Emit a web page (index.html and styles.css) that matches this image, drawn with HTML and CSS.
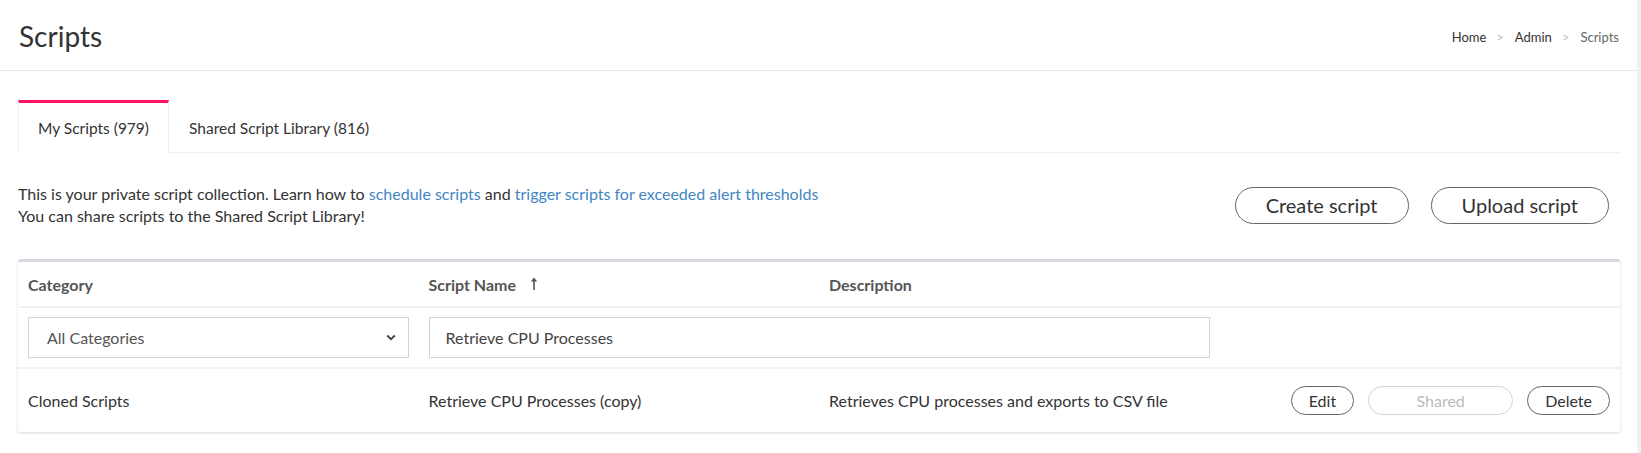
FILE: index.html
```html
<!DOCTYPE html>
<html lang="en">
<head>
<meta charset="utf-8">
<title>Scripts</title>
<link rel="stylesheet" href="styles.css">
</head>
<body>
<div class="page">
  <div class="main">
    <header class="topbar">
      <h1 class="title">Scripts</h1>
      <nav class="crumbs">
        <a class="crumb" href="#">Home</a>
        <span class="sep">&gt;</span>
        <a class="crumb" href="#">Admin</a>
        <span class="sep">&gt;</span>
        <span class="crumb current">Scripts</span>
      </nav>
    </header>
    <section class="content">
      <div class="tabs">
        <div class="tab active">My Scripts (979)</div>
        <div class="tab">Shared Script Library (816)</div>
        <div class="tab-fill"></div>
      </div>
      <div class="intro">
        <div class="intro-text">
          <p>This is your private script collection. Learn how to <a href="#">schedule scripts</a> and <a href="#">trigger scripts for exceeded alert thresholds</a></p>
          <p>You can share scripts to the Shared Script Library!</p>
        </div>
        <div class="intro-actions">
          <button class="pill big">Create script</button>
          <button class="pill big">Upload script</button>
        </div>
      </div>
      <div class="card">
        <table class="grid">
          <colgroup>
            <col class="c"><col class="c"><col class="c"><col class="c">
          </colgroup>
          <thead>
            <tr class="head">
              <th>Category</th>
              <th><span class="sort">Script Name<svg class="arrow" width="8" height="14" viewBox="0 0 8 14"><path d="M4 13V3" stroke="#555" stroke-width="1.6" fill="none"/><path d="M4 0.5L7.2 4.5H0.8Z" fill="#555"/></svg></span></th>
              <th>Description</th>
              <th></th>
            </tr>
          </thead>
          <tbody>
            <tr class="filters">
              <td>
                <div class="select">
                  <span>All Categories</span>
                  <svg width="10" height="7" viewBox="0 0 10 7"><path d="M1.2 1.5L5 5.2L8.8 1.5" stroke="#444" stroke-width="1.8" fill="none"/></svg>
                </div>
              </td>
              <td colspan="2"><input class="search" type="text" value="Retrieve CPU Processes"></td>
              <td></td>
            </tr>
            <tr class="row">
              <td>Cloned Scripts</td>
              <td>Retrieve CPU Processes (copy)</td>
              <td>Retrieves CPU processes and exports to CSV file</td>
              <td class="actions">
                <div class="btns">
                  <button class="pill small">Edit</button>
                  <button class="pill small disabled">Shared</button>
                  <button class="pill small">Delete</button>
                </div>
              </td>
            </tr>
          </tbody>
        </table>
      </div>
    </section>
  </div>
  <div class="track"></div>
</div>
</body>
</html>
```

FILE: styles.css
```css
* { box-sizing: border-box; }
html, body { margin: 0; padding: 0; background: #fff; }
body {
  font-family: Lato, "Noto Sans", "Liberation Sans", sans-serif;
  color: #333;
  font-size: 16px;
}
.page {
  display: flex;
  min-height: 453px;
}
.main { flex: 1; min-width: 0; }
.track { width: 4px; background: #f1f1f1; }

.topbar {
  height: 71px;
  border-bottom: 1px solid #e6e6e6;
  display: flex;
  align-items: center;
  justify-content: space-between;
  padding: 0 18px 0 19px;
}
.title {
  margin: 0;
  font-weight: 400;
  font-size: 28px;
  color: #333;
  position: relative;
  top: 1px;
}
.crumbs {
  display: flex;
  align-items: center;
  font-size: 13px;
  padding-top: 4px;
}
.crumb { color: #333; text-decoration: none; }
.crumb.current { color: #666; }
.sep { color: #bbb; margin: 0 11px 0 10px; }

.content { padding: 29px 17px 0 18px; }

.tabs { display: flex; height: 53px; }
.tab {
  height: 53px;
  padding: 0 20px;
  display: flex;
  align-items: center;
  font-size: 15.5px;
  color: #333;
  border-top: 3px solid transparent;
  border-bottom: 1px solid #efefef;
}
.tab.active {
  border-top-color: #ff1464;
  border-left: 1px solid #efefef;
  border-right: 1px solid #efefef;
  border-bottom-color: #fff;
  padding: 0 19px;
}
.tab-fill { flex: 1; border-bottom: 1px solid #efefef; }

.intro {
  display: flex;
  justify-content: space-between;
  align-items: center;
  margin-top: 30px;
  margin-bottom: 32px;
}
.intro-text p { margin: 0; line-height: 22px; font-size: 16px; }
.intro-text a { color: #4286c2; text-decoration: none; }
.intro-actions { display: flex; gap: 22px; padding-right: 11px; }

.pill {
  font-family: inherit;
  background: #fff;
  color: #333;
  border: 1px solid #666;
  border-radius: 999px;
  cursor: pointer;
}
.pill.big { height: 37px; font-size: 20px; padding: 0 30px; }
.pill.small { height: 29px; font-size: 16px; padding: 0 17px; }
.pill.disabled { color: #bbb; border-color: #d2d2d2; min-width: 145px; }

.card {
  border-top: 3px solid #d6d9e0;
  border-radius: 3px;
  box-shadow: 0 1px 3px rgba(0,0,0,0.16);
  background: #fff;
}
.grid { width: 100%; border-collapse: collapse; table-layout: fixed; }
.grid th, .grid td { padding: 0 10px; text-align: left; }
.head th {
  height: 45px;
  font-weight: 700;
  color: #555;
  font-size: 16px;
  border-bottom: 2px solid #f2f2f2;
}
.sort { display: inline-flex; align-items: center; gap: 14px; }
.filters td { height: 61px; border-bottom: 2px solid #f2f2f2; }
.select {
  height: 41px;
  border: 1px solid #cfd3da;
  display: flex;
  align-items: center;
  justify-content: space-between;
  padding: 0 12px 0 18px;
  color: #555;
  font-size: 16px;
}
.search {
  width: 100%;
  height: 41px;
  border: 1px solid #cfd3da;
  padding: 0 16px;
  font-family: inherit;
  font-size: 16px;
  color: #444;
  outline: none;
}
.row td { height: 64px; font-size: 16px; color: #333; }
.actions { padding-right: 11px; }
.btns { display: flex; justify-content: flex-end; gap: 14px; }
```
